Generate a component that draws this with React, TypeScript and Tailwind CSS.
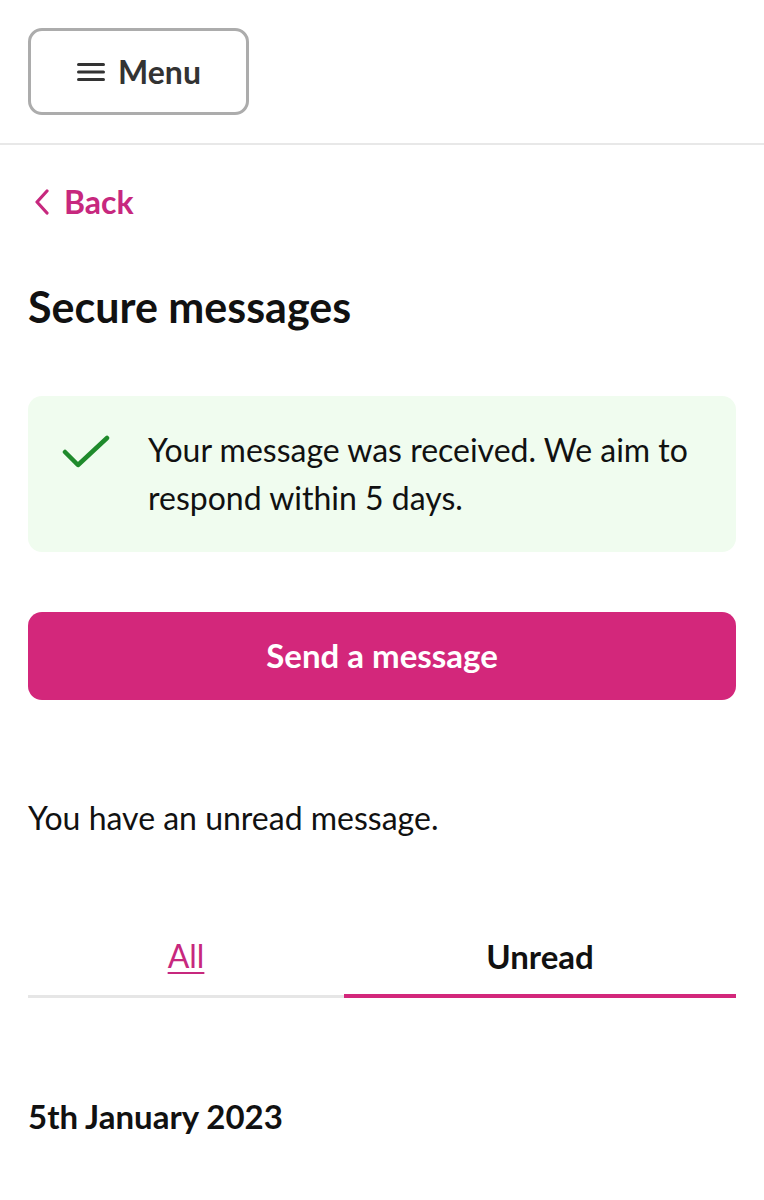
import { useState } from "react";

function MenuIcon() {
  return (
    <svg width="30" height="22" viewBox="0 0 30 22" fill="none" aria-hidden="true">
      <rect x="1" y="2" width="28" height="3" rx="1.5" fill="#333333" />
      <rect x="1" y="9.5" width="28" height="3" rx="1.5" fill="#333333" />
      <rect x="1" y="17" width="28" height="3" rx="1.5" fill="#333333" />
    </svg>
  );
}

function ChevronLeft() {
  return (
    <svg width="16" height="26" viewBox="0 0 16 26" fill="none" aria-hidden="true">
      <path d="M13 2 L3 13 L13 24" stroke="#c7287e" strokeWidth="3.2" strokeLinecap="round" strokeLinejoin="round" />
    </svg>
  );
}

function Tick() {
  return (
    <svg width="48" height="34" viewBox="0 0 48 34" fill="none" aria-hidden="true">
      <path d="M3 17 L16 30 L45 3" stroke="#1f8a2c" strokeWidth="4.5" strokeLinecap="round" strokeLinejoin="round" />
    </svg>
  );
}

const activeTab =
  "h-[68px] pt-[2px] pb-[14px] border-b-4 border-[#d3277b] text-[33px] leading-[48px] font-bold text-[#111]";
const idleTab =
  "h-[68px] pt-[2px] pb-[15px] border-b-[3px] border-[#e6e6e6] text-[32px] leading-[48px] text-[#c7287e] underline decoration-2 underline-offset-4";

export default function App() {
  const [tab, setTab] = useState<"all" | "unread">("unread");

  return (
    <div className="min-h-[1200px] bg-white text-[#111] font-['Lato','Noto_Sans',sans-serif]">
      <header className="border-b-2 border-[#e8e8e8] px-7 pt-7 pb-[28px]">
        <button className="flex h-[87px] w-[221px] items-center justify-center gap-3 rounded-[14px] border-[3px] border-[#acacac] text-[32px] font-bold text-[#333]">
          <MenuIcon />
          Menu
        </button>
      </header>

      <main className="px-7">
        <a href="#" className="mt-[37px] flex items-center gap-[14px] pl-[6px] text-[32px] font-bold leading-[40px] text-[#c7287e]">
          <ChevronLeft />
          Back
        </a>

        <h1 className="mt-[59px] text-[43px] font-bold leading-[52px]">Secure messages</h1>

        <div className="mt-[63px] flex items-start gap-[38px] rounded-[14px] bg-[#f0fcef] px-[34px] py-[30px]">
          <div className="pt-[9px]">
            <Tick />
          </div>
          <p className="text-[32px] leading-[48px] text-[#111]">
            Your message was received. We aim to respond within 5 days.
          </p>
        </div>

        <button className="mt-[60px] flex h-[88px] w-full items-center justify-center rounded-[14px] bg-[#d3277b] text-[33px] font-bold text-white">
          Send a message
        </button>

        <p className="mt-[94px] text-[32px] leading-[48px]">You have an unread message.</p>

        <div className="mt-[88px] grid grid-cols-[316px_1fr] items-end">
          <button onClick={() => setTab("all")} className={tab === "all" ? activeTab : idleTab}>
            All
          </button>
          <button onClick={() => setTab("unread")} className={tab === "unread" ? activeTab : idleTab}>
            Unread
          </button>
        </div>

        <h2 className="mt-[94px] text-[33px] font-bold leading-[48px]">5th January 2023</h2>
      </main>
    </div>
  );
}
